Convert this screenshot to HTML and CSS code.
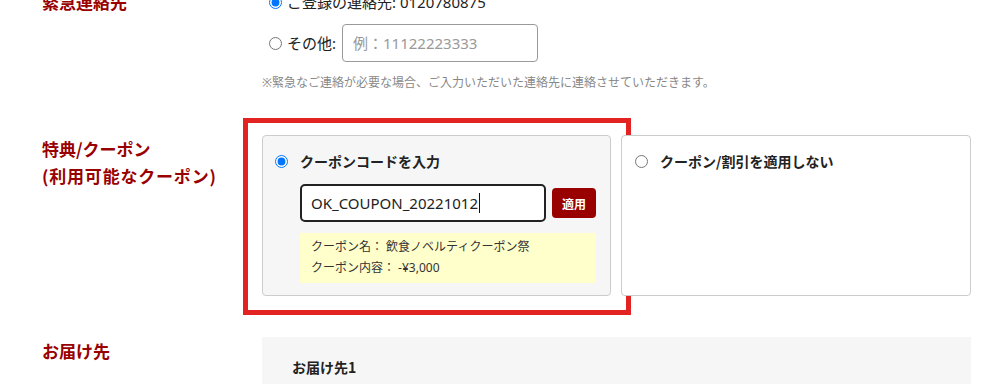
FILE: index.html
```html
<!DOCTYPE html>
<html lang="ja">
<head>
<meta charset="utf-8">
<title>注文情報</title>
<link rel="stylesheet" href="styles.css">
</head>
<body>
<div class="page">
  <section class="row row-emergency">
    <h3 class="label">緊急連絡先</h3>
    <div class="content">
      <label class="opt opt-first"><input type="radio" name="tel" checked><span>ご登録の連絡先: 0120780875</span></label>
      <label class="opt opt-other"><input type="radio" name="tel"><span>その他:</span><input type="text" class="tel-input" placeholder="例：11122223333"></label>
      <p class="note">※緊急なご連絡が必要な場合、ご入力いただいた連絡先に連絡させていただきます。</p>
    </div>
  </section>

  <section class="row row-coupon">
    <h3 class="label">特典/クーポン<br><span class="wide">(利用可能なクーポン)</span></h3>
    <div class="content cards">
      <div class="card card-active">
        <label class="card-head"><input type="radio" name="coupon" checked><span>クーポンコードを入力</span></label>
        <div class="code-row">
          <div class="code-input"><span>OK_COUPON_20221012</span><span class="caret"></span></div>
          <button class="apply" type="button">適用</button>
        </div>
        <div class="coupon-info">
          <div>クーポン名： 飲食ノベルティクーポン祭</div>
          <div>クーポン内容： -¥3,000</div>
        </div>
        <div class="highlight"></div>
      </div>
      <div class="card card-plain">
        <label class="card-head"><input type="radio" name="coupon"><span>クーポン/割引を適用しない</span></label>
      </div>
    </div>
  </section>

  <section class="row row-delivery">
    <h3 class="label">お届け先</h3>
    <div class="content delivery">
      <div class="delivery-title">お届け先1</div>
    </div>
  </section>
</div>
</body>
</html>
```

FILE: styles.css
```css
* { box-sizing: border-box; }
html, body { margin: 0; padding: 0; background: #fff; overflow: hidden; }
body {
  font-family: "Noto Sans", "Noto Sans CJK JP", sans-serif;
  color: #222;
  font-size: 14px;
}
.page {
  margin-top: -9px;
  padding: 0 18px 0 42px;
}
.row {
  display: grid;
  grid-template-columns: 220px 1fr;
}
.label {
  margin: 0;
  font-family: "Noto Sans CJK JP", sans-serif;
  font-size: 17px;
  font-weight: 700;
  line-height: 27px;
  color: #990000;
}
.label .wide { letter-spacing: 0.8px; }
.row-emergency .label { line-height: 22px; }

/* emergency */
.opt {
  display: flex;
  align-items: center;
  line-height: 22px;
  font-size: 15px;
}
.opt input[type=radio] {
  width: 13px;
  height: 13px;
  margin: 0 5px 0 7px;
}
.opt-other { margin-top: 11px; }
.tel-input {
  margin-left: 6px;
  width: 196px;
  height: 38px;
  border: 1px solid #999;
  border-radius: 4px;
  padding: 0 10px;
  font-family: "Noto Sans", "Noto Sans CJK JP", sans-serif;
  font-size: 15px;
  color: #222;
}
.tel-input::placeholder { color: #999; }
.note {
  margin: 12px 0 0;
  font-size: 12px;
  line-height: 18px;
  color: #888;
}

/* coupon */
.row-coupon { margin-top: 43px; }
.cards {
  display: flex;
  gap: 10px;
}
.card {
  flex: 1;
  height: 161px;
  border: 1px solid #ccc;
  border-radius: 4px;
  position: relative;
}
.card-active {
  background: #f6f6f6;
  padding: 15px 14px 14px 12px;
}
.card-plain {
  background: #fff;
  padding: 15px 14px 14px 13px;
}
.card-head {
  display: flex;
  align-items: center;
  height: 20px;
  font-family: "Noto Sans CJK JP", sans-serif;
  font-weight: 700;
  font-size: 14px;
}
.card-head input {
  width: 13px;
  height: 13px;
  margin: 0 12px 0 0;
}
.code-row {
  margin: 13px 0 0 25px;
  display: flex;
  align-items: center;
  gap: 6px;
}
.code-input {
  width: 246px;
  height: 38px;
  border: 2px solid #222;
  border-radius: 5px;
  padding: 0 9px;
  font-family: "Noto Sans", sans-serif;
  font-size: 15px;
  color: #222;
  background: #fff;
  display: flex;
  align-items: center;
}
.caret {
  display: inline-block;
  width: 1px;
  height: 20px;
  background: #111;
  margin-left: 1px;
}
.apply {
  width: 44px;
  height: 30px;
  border: 0;
  border-radius: 4px;
  background: #990000;
  color: #fff;
  font-family: "Noto Sans CJK JP", sans-serif;
  font-weight: 700;
  font-size: 12px;
  padding: 0;
}
.coupon-info {
  margin: 11px 0 0 25px;
  background: #ffffcc;
  padding: 3px 11px 5px;
  font-size: 12px;
  line-height: 21px;
  color: #333;
}
.highlight {
  position: absolute;
  left: -20px;
  top: -18px;
  width: 388px;
  height: 197px;
  border: 5px solid #e32322;
  pointer-events: none;
}

/* delivery */
.row-delivery { margin-top: 41px; }
.delivery {
  background: #f6f6f6;
  padding: 20px 30px 40px;
  min-height: 80px;
}
.delivery-title {
  font-family: "Noto Sans CJK JP", sans-serif;
  font-weight: 700;
  font-size: 14px;
  line-height: 20px;
}
```
